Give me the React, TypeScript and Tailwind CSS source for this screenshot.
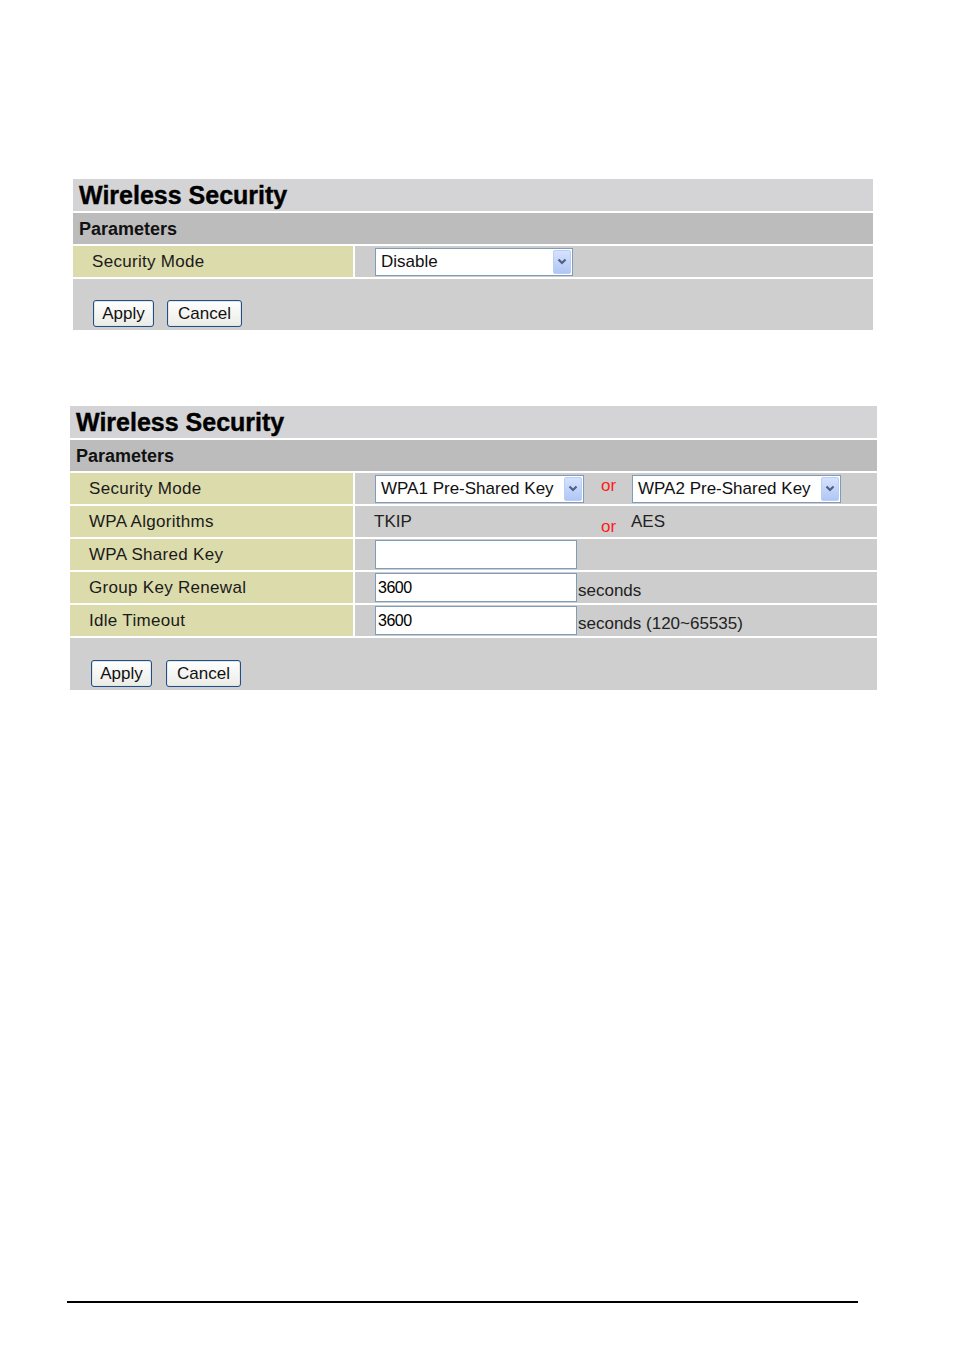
import React from 'react';

const font = { fontFamily: '"Liberation Sans", Arial, sans-serif' };

interface FakeSelectProps {
    value: string;
    width: string;
    height: string;
}

const FakeSelect: React.FC<FakeSelectProps> = ({ value, width, height }) => (
    <div className={`${width} ${height} flex items-stretch border border-[#7f9db9] bg-white`}>
        <div className="flex-1 flex items-center pl-[5px] text-[17px] text-[#111] leading-none whitespace-nowrap overflow-hidden">
            {value}
        </div>
        <div className="m-[1px] w-[18px] flex items-center justify-center rounded-[2px] border border-[#b9cdf6] bg-gradient-to-b from-[#d6e2fd] to-[#b1c6f6]">
            <svg width="10" height="7" viewBox="0 0 10 7">
                <path d="M1.5 1.5 L5 5 L8.5 1.5" fill="none" stroke="#4d6185" strokeWidth="2.2" />
            </svg>
        </div>
    </div>
);

const TextBox: React.FC<{ value?: string }> = ({ value }) => (
    <div className="w-[202px] h-[29px] border border-[#7f9db9] bg-white flex items-center pl-[2px] text-[16px] tracking-[-0.5px] text-black leading-none">
        {value}
    </div>
);

const Button: React.FC<{ label: string; width: string }> = ({ label, width }) => (
    <button
        type="button"
        className={`${width} h-[27px] rounded-[3px] border border-[#1d4f8a] bg-gradient-to-b from-white to-[#ebebe6] text-[17px] text-[#111] leading-none shadow-[inset_0_0_0_1px_#e4e4e0]`}
    >
        {label}
    </button>
);

interface RowProps {
    label: string;
    labelWidth: string;
    children?: React.ReactNode;
}

const Row: React.FC<RowProps> = ({ label, labelWidth, children }) => (
    <div className="flex h-[31px] gap-[2px]">
        <div className={`${labelWidth} bg-[#dcdbab] flex items-center pl-[19px] text-[17px] tracking-[0.3px] text-[#1a1a1a]`}>
            {label}
        </div>
        <div className="flex-1 bg-[#cdcdcd] flex items-center pl-[20px] text-[17px] text-[#222]">
            {children}
        </div>
    </div>
);

const PanelHead: React.FC = () => (
    <>
        <div className="h-[32px] bg-[#d4d4d6] flex items-center pl-[6px] text-[25px] font-bold text-black leading-none [-webkit-text-stroke:0.4px_black]">
            Wireless Security
        </div>
        <div className="h-[31px] bg-[#bcbcbc] flex items-center pl-[6px] text-[18px] font-bold text-[#111] leading-none">
            Parameters
        </div>
    </>
);

const App: React.FC = () => {
    return (
        <div className="w-[954px] h-[1350px] bg-white" style={font}>
            <div className="h-[179px]" />

            {/* disabled mode */}
            <div className="ml-[73px] w-[800px] flex flex-col gap-[2px] bg-white">
                <PanelHead />
                <Row label="Security Mode" labelWidth="w-[280px]">
                    <FakeSelect value="Disable" width="w-[198px]" height="h-[28px]" />
                </Row>
                <div className="h-[51px] bg-[#cfcfcf] flex items-start gap-[13px] pl-[20px] pt-[21px]">
                    <Button label="Apply" width="w-[61px]" />
                    <Button label="Cancel" width="w-[75px]" />
                </div>
            </div>

            <div className="h-[76px]" />

            {/* WPA pre-shared key mode */}
            <div className="ml-[70px] w-[807px] flex flex-col gap-[2px] bg-white">
                <PanelHead />
                <Row label="Security Mode" labelWidth="w-[283px]">
                    <FakeSelect value="WPA1 Pre-Shared Key" width="w-[209px]" height="h-[28px]" />
                    <span className="ml-[17px] w-[31px] text-[#ff1a1a] self-start">or</span>
                    <FakeSelect value="WPA2 Pre-Shared Key" width="w-[209px]" height="h-[28px]" />
                </Row>
                <Row label="WPA Algorithms" labelWidth="w-[283px]">
                    <span className="w-[227px] -ml-[1px]">TKIP</span>
                    <span className="w-[30px] text-[#ff1a1a] pt-[10px]">or</span>
                    <span>AES</span>
                </Row>
                <Row label="WPA Shared Key" labelWidth="w-[283px]">
                    <TextBox />
                </Row>
                <Row label="Group Key Renewal" labelWidth="w-[283px]">
                    <TextBox value="3600" />
                    <span className="pt-[6px] ml-[1px]">seconds</span>
                </Row>
                <Row label="Idle Timeout" labelWidth="w-[283px]">
                    <TextBox value="3600" />
                    <span className="pt-[6px] ml-[1px]">seconds (120~65535)</span>
                </Row>
                <div className="h-[52px] bg-[#cfcfcf] flex items-start gap-[14px] pl-[21px] pt-[22px]">
                    <Button label="Apply" width="w-[61px]" />
                    <Button label="Cancel" width="w-[75px]" />
                </div>
            </div>

            <div className="ml-[67px] mt-[611px] w-[791px] h-[2px] bg-black" />
        </div>
    );
};

export default App;
